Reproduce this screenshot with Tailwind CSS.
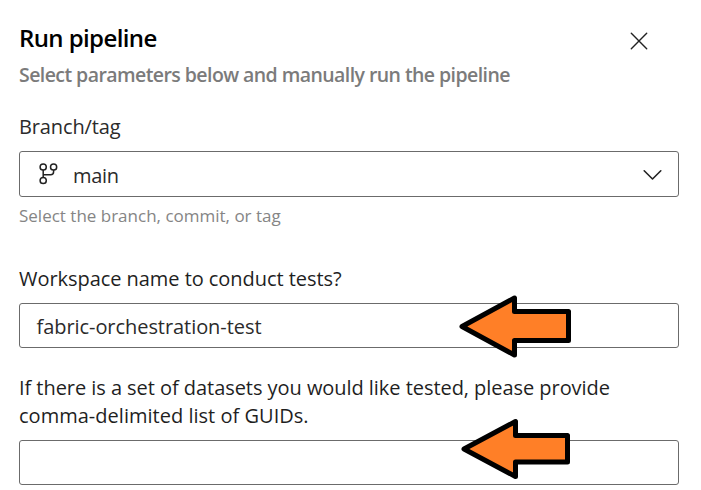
<!DOCTYPE html>
<html lang="en">
<head>
<meta charset="utf-8">
<title>Run pipeline</title>
<script src="https://cdn.jsdelivr.net/npm/@tailwindcss/browser@4"></script>
</head>
<body class="bg-white">
<main class="relative h-[490px] w-[701px] overflow-hidden pl-[19px] pr-[22px] pt-[22px] font-['Open_Sans','Noto_Sans',sans-serif] text-[20px] text-[#1f1f1f]">
  <header class="flex h-[68px] justify-between pr-[31px]">
    <div class="whitespace-nowrap">
      <h1 class="h-[36px] text-[24px] leading-[32px] font-semibold tracking-[-0.6px] text-black"><span>Run pipeline</span></h1>
      <p class="text-[19.5px] leading-[34px] font-semibold tracking-[-0.57px] text-[#7b7b7b]"><span>Select parameters below and manually run the pipeline</span></p>
    </div>
    <button aria-label="Close" class="mt-[10px] h-[18px] w-[18px]">
      <svg width="18" height="18" viewBox="0 0 18 18" fill="none" stroke="#222" stroke-width="1.4" stroke-linecap="round"><path d="M1.3 1.3 16.7 16.7M16.7 1.3 1.3 16.7"/></svg>
    </button>
  </header>
  <form>
    <label class="mt-[23px] block h-[38px] leading-[28px] tracking-[-0.12px] text-[#2b2b2b]"><span>Branch/tag</span></label>
    <div class="flex h-[46px] items-center rounded-[3px] border border-[#6b6b6b] pl-[19px] pr-[16px]">
      <svg class="-mt-[1px]" width="20" height="24" viewBox="0 0 20 24" fill="none" stroke="#222" stroke-width="1.5"><circle cx="4.2" cy="5" r="3.1"/><circle cx="14.6" cy="5" r="3.1"/><circle cx="4.2" cy="18.500" r="3.1"/><path d="M4.2 8.1v7.3M14.6 8.1v1.6q0 3-3 3H4.2"/></svg>
      <span class="ml-[14px] flex-1 pt-[3px] leading-[28px] tracking-[-0.3px] text-[#2b2b2b]"><span>main</span></span>
      <svg class="mt-[1px]" width="20" height="12" viewBox="0 0 20 12" fill="none" stroke="#222" stroke-width="1.6" stroke-linecap="round" stroke-linejoin="round"><path d="M2.2 1.8 10.500 10l8.300-8.200"/></svg>
    </div>
    <p class="h-[68px] pt-[7px] text-[17px] leading-[24px] whitespace-nowrap text-[#858585]"><span>Select the branch, commit, or tag</span></p>
    <label class="block h-[38px] leading-[28px] tracking-[-0.05px] whitespace-nowrap"><span>Workspace name to conduct tests?</span></label>
    <div class="flex h-[45px] items-center rounded-[3px] border border-[#6b6b6b] pl-[16.5px] pt-[3px] text-[#2b2b2b]"><span class="leading-[28px] tracking-[-0.06px]">fabric-orchestration-test</span></div>
    <label class="block h-[92px] pt-[26px] leading-[28px] tracking-[-0.05px] whitespace-nowrap"><span>If there is a set of datasets you would like tested, please provide</span><br><span class="tracking-[0.02px]">comma-delimited list of GUIDs.</span></label>
    <div class="h-[45px] rounded-[3px] border border-[#6b6b6b]"></div>
  </form>
  <svg class="pointer-events-none absolute top-0 left-0" width="701" height="490" fill="#ff7f27" stroke="#000" stroke-width="5" stroke-linejoin="round">
    <path d="M462 326.5 514.5 298v13.5h54v29h-54V355Z"/>
    <path d="M464 449 515.5 421.5v14h52v26.500h-52V476.500Z"/>
  </svg>
</main>
</body>
</html>
